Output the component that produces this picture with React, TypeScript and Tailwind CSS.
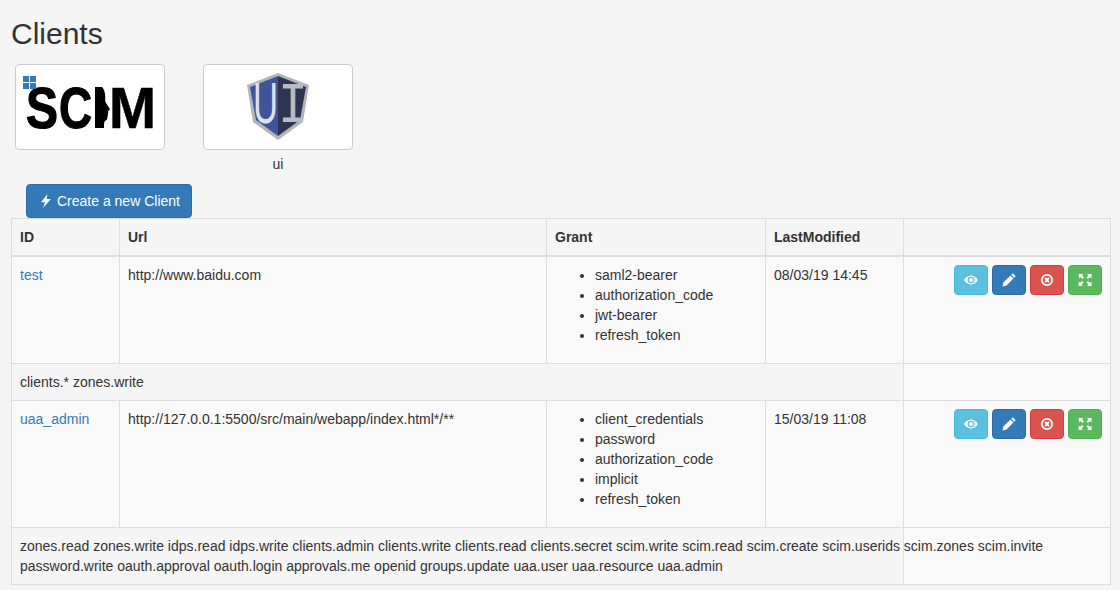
import React from "react";

const sans = "font-['Liberation_Sans',Arial,sans-serif]";

type Client = {
  id: string;
  url: string;
  grants: string[];
  modified: string;
  scopes: string;
};

const clients: Client[] = [
  {
    id: "test",
    url: "http://www.baidu.com",
    grants: ["saml2-bearer", "authorization_code", "jwt-bearer", "refresh_token"],
    modified: "08/03/19 14:45",
    scopes: "clients.* zones.write",
  },
  {
    id: "uaa_admin",
    url: "http://127.0.0.1:5500/src/main/webapp/index.html*/**",
    grants: ["client_credentials", "password", "authorization_code", "implicit", "refresh_token"],
    modified: "15/03/19 11:08",
    scopes:
      "zones.read zones.write idps.read idps.write clients.admin clients.write clients.read clients.secret scim.write scim.read scim.create scim.userids scim.zones scim.invite password.write oauth.approval oauth.login approvals.me openid groups.update uaa.user uaa.resource uaa.admin",
  },
];

function ScimLogo() {
  const letter = { fontFamily: "Liberation Sans, sans-serif", fontWeight: 700, fontSize: 57, lengthAdjust: "spacingAndGlyphs" as const, stroke: "#000" };
  return (
    <div className="relative h-[84px] w-[148px]">
      <svg viewBox="0 0 148 84" className="h-[84px] w-[148px]">
        <text x="10" y="63" textLength="32" strokeWidth="1.2" {...letter}>
          S
        </text>
        <text x="43" y="63" textLength="33" strokeWidth="1.2" {...letter}>
          C
        </text>
        <path d="M79 22h7c2 2 3 5 3.200 9 .2 3-.5 5 .8 7l3.800 6c.2 1-1.300 1.500-1.800 2.500.5 1 .3 2-.3 2.500.5 1 .3 2-.4 2.800.5 2-.3 3.500-2.300 4.200-1 1-1 3-1 7H79z" fill="#000" />
        <text x="93" y="63" textLength="47" strokeWidth="0.6" {...letter}>
          M
        </text>
      </svg>
      {/* broken image marker */}
      <div className="absolute left-[7px] top-[11px] grid h-[13px] w-[13px] grid-cols-2 gap-px">
        <span className="bg-[#337ab7]" />
        <span className="bg-[#337ab7]" />
        <span className="bg-[#337ab7]" />
        <span className="bg-[#337ab7]" />
      </div>
    </div>
  );
}

function UiLogo() {
  return (
    <svg viewBox="0 0 148 84" className="h-[84px] w-[148px]">
      <polygon points="74,8 105,20 99,57 74,75 49,57 43,20" fill="#b4b5b8" />
      <polygon points="74,11 46,22 52,55 74,71" fill="#3f559b" />
      <polygon points="74,11 102,22 96,55 74,71" fill="#2d3550" />
      <text x="49" y="58" fontFamily="Liberation Sans, sans-serif" fontSize="57" fill="#dfe1ea" textLength="25" lengthAdjust="spacingAndGlyphs">
        U
      </text>
      <text x="74" y="57" fontFamily="Liberation Mono, monospace" fontSize="58" fill="#b9bbc2" textLength="30" lengthAdjust="spacingAndGlyphs">
        I
      </text>
    </svg>
  );
}

function ActionButton({ color, children }: { color: string; children: React.ReactNode }) {
  return (
    <button className={`flex h-[30px] w-[34px] items-center justify-center rounded border ${color}`}>
      {children}
    </button>
  );
}

function Actions() {
  return (
    <div className="flex justify-end gap-1">
      <ActionButton color="border-[#46b8da] bg-[#5bc0de]">
        <svg viewBox="0 0 14 14" className="h-[14px] w-[14px]" fill="#fff">
          <path fillRule="evenodd" d="M7 2.500c3.200 0 5.800 2.200 7 4.500-1.200 2.300-3.800 4.500-7 4.500S1.200 9.300 0 7c1.200-2.300 3.800-4.500 7-4.500zm0 1.200a3.300 3.300 0 1 0 0 6.600 3.300 3.300 0 0 0 0-6.600z" />
          <circle cx="7" cy="7" r="2" />
        </svg>
      </ActionButton>
      <ActionButton color="border-[#2e6da4] bg-[#337ab7]">
        <svg viewBox="0 0 14 14" className="h-[14px] w-[14px]" fill="#fff">
          <path d="M.5 13.500l.7-3.700 7.300-7.300 3 3-7.300 7.300zM9.300 1.700l.9-.9c.3-.3.8-.3 1.100 0l1.900 1.900c.3.300.3.800 0 1.100l-.9.900z" />
        </svg>
      </ActionButton>
      <ActionButton color="border-[#d43f3a] bg-[#d9534f]">
        <svg viewBox="0 0 14 14" className="h-[14px] w-[14px]" fill="none" stroke="#fff">
          <circle cx="7" cy="7" r="5.200" strokeWidth="1.700" />
          <path d="M5 5l4 4M9 5l-4 4" strokeWidth="1.800" />
        </svg>
      </ActionButton>
      <ActionButton color="border-[#4cae4c] bg-[#5cb85c]">
        <svg viewBox="0 0 14 14" className="h-[14px] w-[14px]" fill="#fff">
          <path d="M.5 1h5L4 2.500l2 2-1.500 1.500-2-2L1 5.500zM13.500 1v4.500L12 4l-2 2-1.500-1.500 2-2L9 1zM.5 13V8.500L2 10l2-2 1.500 1.500-2 2L5 13zM13.500 13H9l1.500-1.500-2-2L10 8l2 2 1.500-1.500z" />
        </svg>
      </ActionButton>
    </div>
  );
}

const cell = "border border-[#ddd] p-2 align-top";

export default function App() {
  return (
    <div className={`h-[590px] w-[1120px] overflow-hidden bg-[#f5f5f5] text-sm leading-5 text-[#333] ${sans}`}>
      <div className="px-[11px] pt-[17px]">
        <h1 className="text-[30px] leading-[33px]">Clients</h1>

        {/* Client logos */}
        <div className="mt-[14px] flex gap-[38px] pl-1">
          <div className="w-[150px]">
            <div className="h-[86px] rounded border border-[#ccc] bg-white">
              <ScimLogo />
            </div>
          </div>
          <div className="w-[150px] text-center">
            <div className="h-[86px] rounded border border-[#ccc] bg-white">
              <UiLogo />
            </div>
            <div className="mt-[4px]">ui</div>
          </div>
        </div>

        <div className="pl-[15px]">
          <button className="mt-[10px] flex h-[34px] items-center gap-1 rounded border border-[#2e6da4] bg-[#337ab7] pl-3 pr-[11px] text-white">
            <svg viewBox="0 0 14 14" className="h-[14px] w-[14px]" fill="#fff">
              <path d="M8.500 0L2 8.300h4L4 14l8-9H7.500z" />
            </svg>
            Create a new Client
          </button>
        </div>

        {/* Clients table */}
        <table className="w-[1100px] table-fixed border-collapse">
          <colgroup>
            <col className="w-[108px]" />
            <col className="w-[427px]" />
            <col className="w-[219px]" />
            <col className="w-[138px]" />
            <col className="w-[207px]" />
          </colgroup>
          <thead>
            <tr>
              {["ID", "Url", "Grant", "LastModified", ""].map((title) => (
                <th key={title} className="border border-b-2 border-[#ddd] p-2 text-left align-top font-bold">
                  {title}
                </th>
              ))}
            </tr>
          </thead>
          <tbody>
            {clients.map((client) => (
              <React.Fragment key={client.id}>
                <tr className="bg-[#f9f9f9]">
                  <td className={cell}>
                    <a className="text-[#337ab7]">{client.id}</a>
                  </td>
                  <td className={cell}>{client.url}</td>
                  <td className={cell}>
                    <ul className="mb-[10px] list-disc pl-10">
                      {client.grants.map((grant) => (
                        <li key={grant}>{grant}</li>
                      ))}
                    </ul>
                  </td>
                  <td className={cell}>{client.modified}</td>
                  <td className={cell}>
                    <Actions />
                  </td>
                </tr>
                <tr>
                  <td colSpan={4} className={cell}>
                    <div className="w-[1060px]">{client.scopes}</div>
                  </td>
                  <td className={`${cell} bg-[#f9f9f9]`} />
                </tr>
              </React.Fragment>
            ))}
          </tbody>
        </table>
      </div>
    </div>
  );
}
